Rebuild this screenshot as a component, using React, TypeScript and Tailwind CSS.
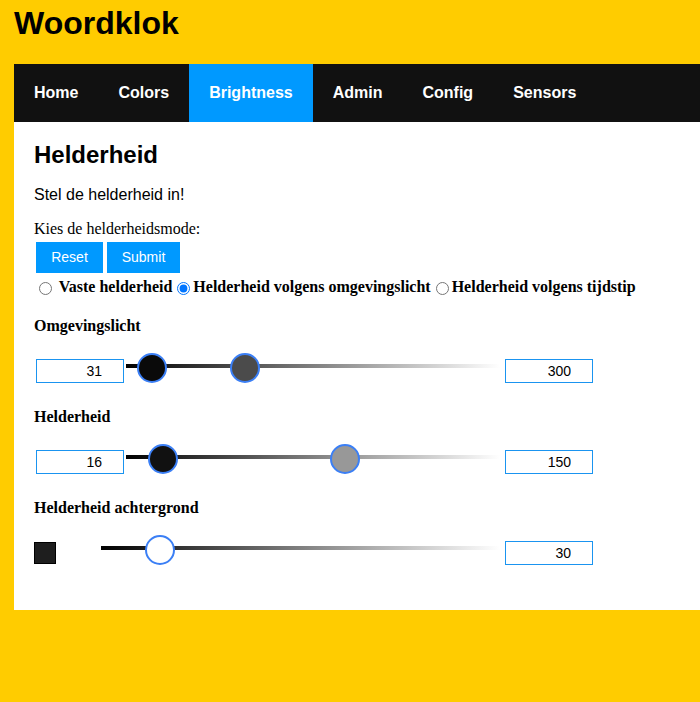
import React from "react";

const sans = "font-['Liberation_Sans',Arial,sans-serif]";
const serif = "font-['Liberation_Serif','Times_New_Roman',serif]";

function NumBox({ value, className }: { value: string; className: string }) {
  return (
    <input
      type="text"
      readOnly
      value={value}
      className={
        "w-[88px] h-[24px] border border-[#1a94f0] bg-white text-right pr-[21px] text-[14px] text-black outline-none font-['Liberation_Sans',Arial,sans-serif] " +
        className
      }
    />
  );
}

export default function App() {
  const nav = ["Home", "Colors", "Brightness", "Admin", "Config", "Sensors"];
  return (
    <div className="w-[700px] h-[702px] bg-[#ffcc00] overflow-hidden">
      <div className="h-[64px] pl-[14px] pt-[5px]">
        <h1 className={`${sans} text-[32px] leading-[37px] font-bold text-black`}>Woordklok</h1>
      </div>
      <nav className={`${sans} ml-[14px] h-[58px] bg-[#111111] flex`}>
        {nav.map((n) => (
          <a
            key={n}
            className={
              n === "Brightness"
                ? "px-5 flex items-center text-white font-bold text-[16px] bg-[#0099ff]"
                : "px-5 flex items-center text-white font-bold text-[16px]"
            }
          >
            {n}
          </a>
        ))}
      </nav>
      <div className="ml-[14px] bg-white pl-[20px] pt-[19px] pb-[45px] text-black">
        <h2 className={`${sans} text-[24px] leading-[28px] font-bold`}>Helderheid</h2>
        <p className={`${sans} text-[16px] leading-[18px] mt-[17px]`}>Stel de helderheid in!</p>
        <p className={`${serif} text-[16px] leading-[18px] mt-[16px]`}>Kies de helderheidsmode:</p>
        <div className={`${sans} flex mt-[4px]`}>
          <button className="ml-[2px] w-[67px] h-[31px] bg-[#0099ff] text-white text-[14px] flex items-center justify-center">
            Reset
          </button>
          <button className="ml-[4px] w-[73px] h-[31px] bg-[#0099ff] text-white text-[14px] flex items-center justify-center">
            Submit
          </button>
        </div>
        <div className={`${serif} text-[16px] leading-[18px] mt-[5px] font-bold whitespace-nowrap`}>
          <input type="radio" name="mode" className="ml-[5px] mr-[3px] w-[13px] h-[13px] align-middle" />
          <span>{" Vaste helderheid"}</span>
          <input type="radio" name="mode" defaultChecked className="ml-[5px] mr-[3px] w-[13px] h-[13px] align-middle" />
          <span>Helderheid volgens omgevingslicht</span>
          <input type="radio" name="mode" className="ml-[5px] mr-[3px] w-[13px] h-[13px] align-middle" />
          <span>Helderheid volgens tijdstip</span>
        </div>

        {/* Omgevingslicht */}
        <p className={`${serif} text-[16px] leading-[18px] mt-[21px] font-bold`}>Omgevingslicht</p>
        <div className="flex items-start h-[30px] mt-[18px]">
          <NumBox value="31" className="ml-[2px] mt-[6px]" />
          <div className="relative ml-[2px] w-[374px] h-[30px]">
            <div className="absolute left-0 right-0 top-[11px] h-[4px] bg-[linear-gradient(to_right,#000000,#ffffff)]" />
            <div className="absolute top-0 left-[11px] w-[30px] h-[30px] rounded-full border-2 border-[#3b7ff5] bg-[#0a0a0a]" />
            <div className="absolute top-0 left-[104px] w-[30px] h-[30px] rounded-full border-2 border-[#3b7ff5] bg-[#4b4b4b]" />
          </div>
          <NumBox value="300" className="ml-[5px] mt-[6px]" />
        </div>

        {/* Helderheid */}
        <p className={`${serif} text-[16px] leading-[18px] mt-[25px] font-bold`}>Helderheid</p>
        <div className="flex items-start h-[30px] mt-[18px]">
          <NumBox value="16" className="ml-[2px] mt-[6px]" />
          <div className="relative ml-[2px] w-[374px] h-[30px]">
            <div className="absolute left-0 right-0 top-[11px] h-[4px] bg-[linear-gradient(to_right,#000000,#ffffff)]" />
            <div className="absolute top-0 left-[22px] w-[30px] h-[30px] rounded-full border-2 border-[#3b7ff5] bg-[#111111]" />
            <div className="absolute top-0 left-[204px] w-[30px] h-[30px] rounded-full border-2 border-[#3b7ff5] bg-[#989898]" />
          </div>
          <NumBox value="150" className="ml-[5px] mt-[6px]" />
        </div>

        {/* Helderheid achtergrond */}
        <p className={`${serif} text-[16px] leading-[18px] mt-[25px] font-bold`}>Helderheid achtergrond</p>
        <div className="flex items-start h-[30px] mt-[18px]">
          <div className="mt-[7px] w-[22px] h-[22px] border border-black bg-[#1e1e1e]" />
          <div className="relative ml-[45px] w-[399px] h-[30px]">
            <div className="absolute left-0 right-0 top-[11px] h-[4px] bg-[linear-gradient(to_right,#000000,#ffffff)]" />
            <div className="absolute top-0 left-[44px] w-[30px] h-[30px] rounded-full border-2 border-[#3b7ff5] bg-white" />
          </div>
          <NumBox value="30" className="ml-[5px] mt-[6px]" />
        </div>
      </div>
    </div>
  );
}
